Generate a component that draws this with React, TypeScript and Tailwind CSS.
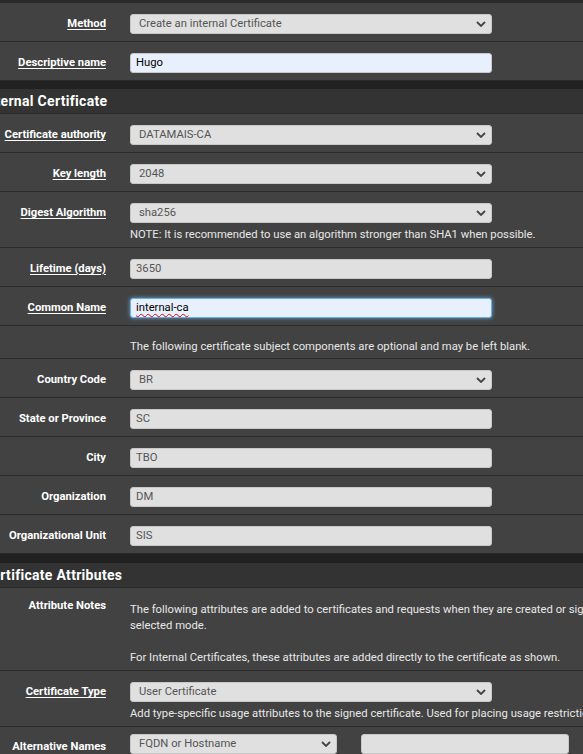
import React from 'react';

const Chevron = () => (
  <svg width="10" height="6" viewBox="0 0 10 6" className="absolute right-[5px] top-1/2 -translate-y-1/2">
    <polyline points="1,1 5,5 9,1" fill="none" stroke="#444" strokeWidth="1.8" />
  </svg>
);

const Select = ({ value, w = 'w-[362px]' }: { value: string; w?: string }) => (
  <div className={`relative ${w} h-[20px] rounded-[3px] bg-[#e0e0e0] border border-[#c8c8c8] pl-[8px] flex items-center text-[11.25px] text-[#555] leading-none`}>
    {value}
    <Chevron />
  </div>
);

const Input = ({ value, variant = 'plain', w = 'w-[362px]' }: { value: string; variant?: 'plain' | 'auto' | 'focus'; w?: string }) => {
  const cls =
    variant === 'auto'
      ? 'bg-[#e8f0fe] border-[#c8c8c8] text-black'
      : variant === 'focus'
      ? 'bg-[#e8f0fe] border-[#66afe9] text-black shadow-[0_0_4px_rgba(102,175,233,0.9)]'
      : 'bg-[#e0e0e0] border-[#c8c8c8] text-[#555]';
  return (
    <div className={`${w} h-[20px] rounded-[3px] border pl-[5px] flex items-center text-[11.25px] leading-none ${cls}`}>
      {variant === 'focus' ? (
        <span className="underline decoration-wavy decoration-[#e00] decoration-[1px] underline-offset-[2px]">{value}</span>
      ) : (
        value
      )}
    </div>
  );
};

const Row = ({
  label,
  link = false,
  children,
  help,
  pad = 'pt-[11px]',
  labelPad = 'pt-[3px]',
}: {
  label?: string;
  link?: boolean;
  children?: React.ReactNode;
  help?: React.ReactNode;
  pad?: string;
  labelPad?: string;
}) => (
  <div className={`flex border-b border-[#2a2a2a] bg-[#424242] ${pad} ${help ? 'pb-[5px]' : 'pb-[7px]'}`}>
    <div className={`w-[106px] shrink-0 text-right ${labelPad} text-[11.25px] leading-[14px]`}>
      {label && (
        <span className={`font-bold text-white ${link ? 'underline underline-offset-[2px]' : ''}`}>{label}</span>
      )}
    </div>
    <div className="ml-[24px] w-[900px] shrink-0">
      {children}
      {help && <div className="mt-[4px] text-[11.25px] text-[#e8e8e8] leading-[15px]">{help}</div>}
    </div>
  </div>
);

const Header = ({ title }: { title: string }) => (
  <div className="h-[25px] bg-[#333] border-b border-[#2a2a2a] flex items-center">
    <span className="-ml-[17px] text-[14px] leading-none font-bold text-white tracking-[0.3px]">{title}</span>
  </div>
);

export default function App() {
  return (
    <div className="w-[583px] h-[754px] overflow-hidden bg-[#424242] font-['Roboto',sans-serif]">
      <div className="h-[3px] bg-[#2a2a2a]" />
      <Row label="Method" link>
        <Select value="Create an internal Certificate" />
      </Row>
      <Row label="Descriptive name" link>
        <Input value="Hugo" variant="auto" />
      </Row>
      <div className="h-[8px] bg-[#212121]" />
      <Header title="Internal Certificate" />
      <Row label="Certificate authority" link>
        <Select value="DATAMAIS-CA" />
      </Row>
      <Row label="Key length" link>
        <Select value="2048" />
      </Row>
      <Row label="Digest Algorithm" link help="NOTE: It is recommended to use an algorithm stronger than SHA1 when possible.">
        <Select value="sha256" />
      </Row>
      <Row label="Lifetime (days)" link>
        <Input value="3650" />
      </Row>
      <Row label="Common Name" link>
        <Input value="internal-ca" variant="focus" />
      </Row>
      <div className="flex border-b border-[#2a2a2a] bg-[#424242] h-[33px] items-center">
        <div className="ml-[130px] text-[11.25px] leading-[15px] text-[#e8e8e8] mt-[8px]">
          The following certificate subject components are optional and may be left blank.
        </div>
      </div>
      <Row label="Country Code">
        <Select value="BR" />
      </Row>
      <Row label="State or Province">
        <Input value="SC" />
      </Row>
      <Row label="City">
        <Input value="TBO" />
      </Row>
      <Row label="Organization">
        <Input value="DM" />
      </Row>
      <Row label="Organizational Unit">
        <Input value="SIS" />
      </Row>
      <div className="h-[9px] bg-[#212121]" />
      <Header title="Certificate Attributes" />
      <div className="flex border-b border-[#2a2a2a] bg-[#424242] pt-[11px] pb-[4px]">
        <div className="w-[106px] shrink-0 text-right text-[11.25px] leading-[14px]">
          <span className="font-bold text-white">Attribute Notes</span>
        </div>
        <div className="ml-[24px] w-[900px] shrink-0 text-[11.25px] text-[#e8e8e8] leading-[16px] pt-[3px]">
          <p>
            The following attributes are added to certificates and requests when they are created or signed. These attributes behave differently depending on the
            <br />
            selected mode.
          </p>
          <p className="mt-[16px]">For Internal Certificates, these attributes are added directly to the certificate as shown.</p>
        </div>
      </div>
      <Row
        label="Certificate Type"
        link
        help="Add type-specific usage attributes to the signed certificate. Used for placing usage restrictions on, or granting abilities to, the signed certificate."
      >
        <Select value="User Certificate" />
      </Row>
      <Row label="Alternative Names" pad="pt-[7px]" labelPad="pt-[6px]">
        <div className="flex gap-[24px]">
          <Select value="FQDN or Hostname" w="w-[207px]" />
          <Input value="" w="w-[208px]" />
        </div>
      </Row>
    </div>
  );
}
